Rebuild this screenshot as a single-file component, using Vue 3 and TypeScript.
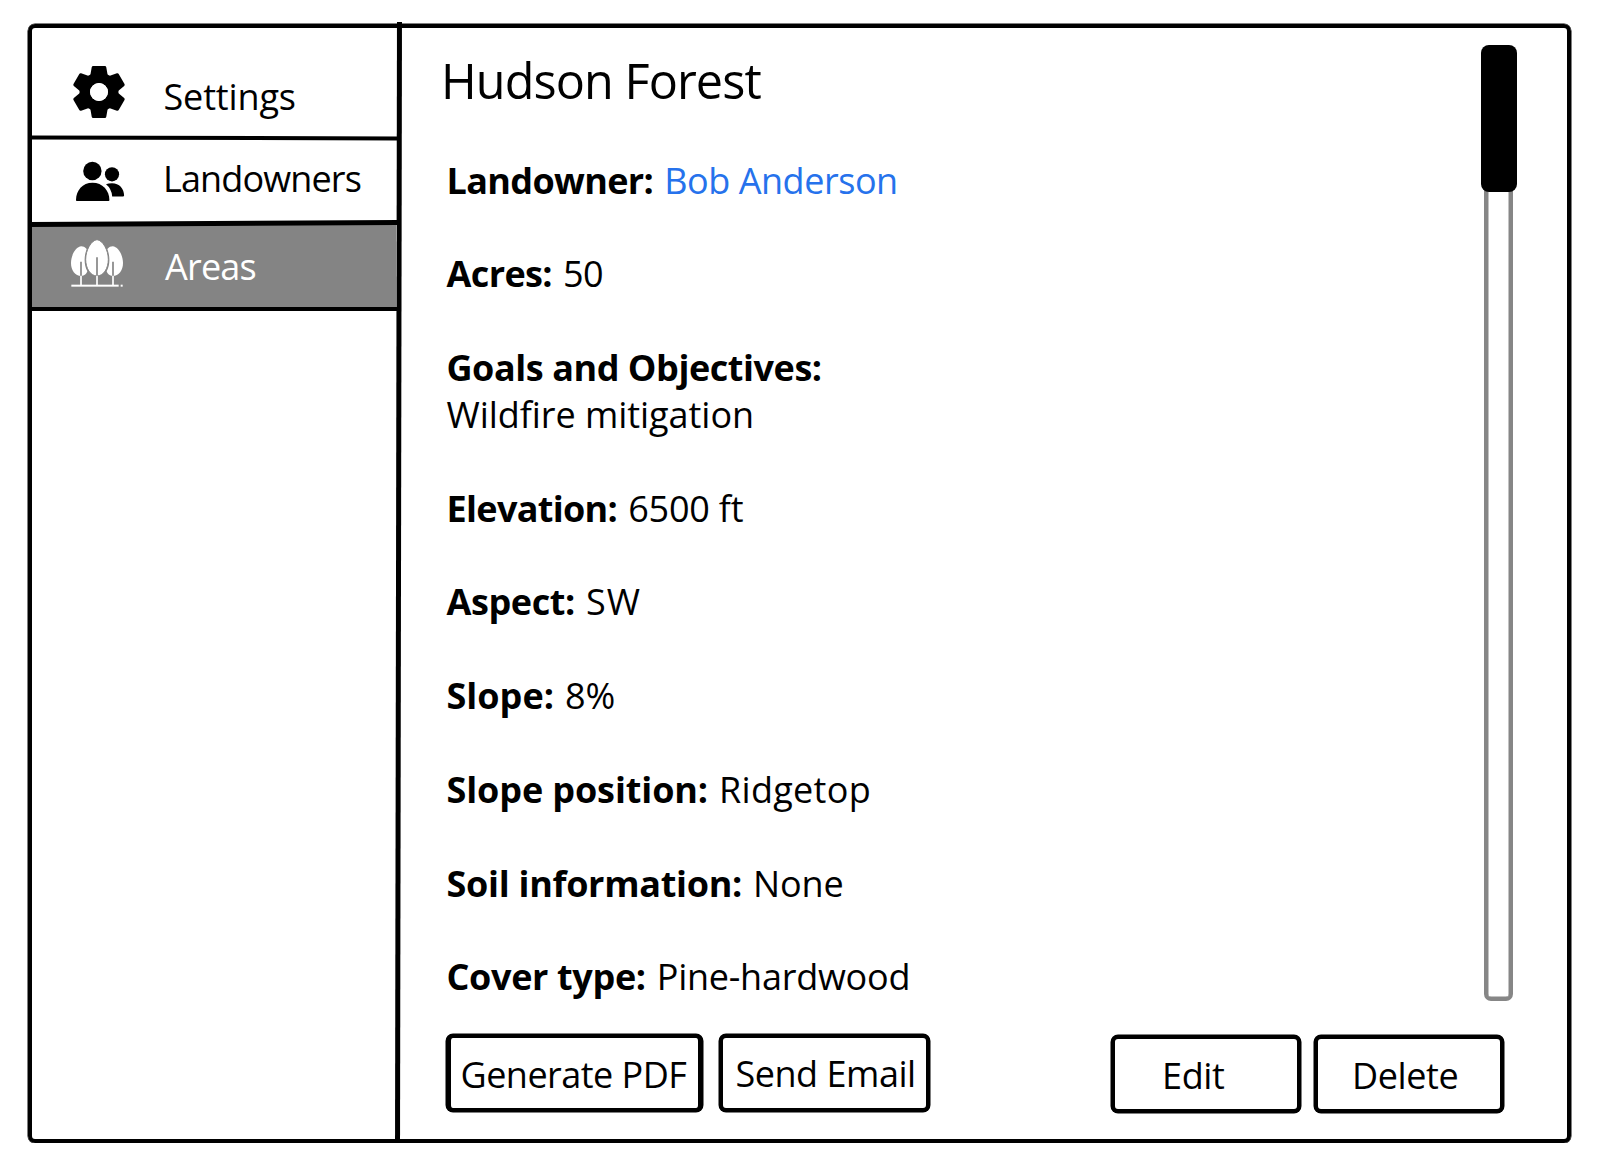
<script setup lang="ts">
interface Field {
  label: string
  value: string
  labelTracking: number
  valueTracking: number
  link?: boolean
  stacked?: boolean
}

const fields: Field[] = [
  { label: 'Landowner:', value: 'Bob Anderson', labelTracking: -0.65, valueTracking: -0.45, link: true },
  { label: 'Acres:', value: '50', labelTracking: -0.6, valueTracking: -0.7 },
  { label: 'Goals and Objectives:', value: 'Wildfire mitigation', labelTracking: -0.45, valueTracking: -0.05, stacked: true },
  { label: 'Elevation:', value: '6500 ft', labelTracking: -0.68, valueTracking: -0.2 },
  { label: 'Aspect:', value: 'SW', labelTracking: -0.4, valueTracking: 1 },
  { label: 'Slope:', value: '8%', labelTracking: 0, valueTracking: 0 },
  { label: 'Slope position:', value: 'Ridgetop', labelTracking: -0.12, valueTracking: 0.3 },
  { label: 'Soil information:', value: 'None', labelTracking: -0.3, valueTracking: -0.1 },
  { label: 'Cover type:', value: 'Pine-hardwood', labelTracking: -0.35, valueTracking: -0.25 },
]

const teeth = [0, 60, 120, 180, 240, 300]
</script>

<template>
  <div class="window">
    <nav class="sidebar">
      <a class="item settings">
        <svg class="icon" width="60" height="64" viewBox="-31 -32 60 64">
          <g fill="#000" stroke="#000" stroke-width="3" stroke-linejoin="round">
            <path v-for="a in teeth" :key="a" d="M-5.8 -24.6H5.8L7.2 -16.5L9 -12H-9L-7.2 -16.5Z" :transform="`rotate(${a})`" />
          </g>
          <circle r="14.2" fill="none" stroke="#000" stroke-width="10.6" />
          <circle r="9" fill="#fff" />
        </svg>
        <span class="text">Settings</span>
      </a>
      <a class="item landowners">
        <svg class="icon" width="60" height="50" viewBox="68 156 60 50">
          <circle cx="92.4" cy="171" r="9.2" />
          <circle cx="112" cy="174.3" r="7.1" />
          <path d="M76 200.2C76 190.5 82.5 182.8 92.5 182.8S109.4 190.5 109.4 200.2Q109.4 201 108.6 201H76.8Q76 201 76 200.2Z" />
          <path d="M106 184.2Q108.3 183.2 112 183.2C119.3 183.2 124.1 188.7 124.1 195.6Q124.1 196.4 123.3 196.4H112.2Q111.6 188.6 106 184.2Z" />
        </svg>
        <span class="text">Landowners</span>
      </a>
      <a class="item areas">
        <svg class="icon" width="60" height="55" viewBox="24 15 180 165">
          <g fill="#fff">
            <path d="M64 49C47 50 33 76 33 99C33 121 45 138 64 138C73 138 80 131 82 124C72 107 71 81 80 57C75 51 69 49 64 49Z" />
            <path d="M158 49C175 50 189 76 189 99C189 121 177 138 158 138C149 138 142 131 140 124C150 107 151 81 142 57C147 51 153 49 158 49Z" />
            <path d="M111 29C93 31 77 61 77 88C77 115 91 138 111 138S145 115 145 88C145 61 129 31 111 29Z" stroke="#848484" stroke-width="3" />
            <rect x="34" y="164" width="142" height="6" />
            <rect x="182" y="164" width="6" height="6" />
          </g>
          <g stroke-width="5" fill="none">
            <path stroke="#848484" d="M63 95V139M111 82V139M159 95V139" />
            <path stroke="#fff" d="M63 137V165M111 137V165M159 137V165" />
          </g>
        </svg>
        <span class="text">Areas</span>
      </a>
    </nav>

    <main class="main">
      <div class="body">
        <section class="details">
          <h1 class="title">Hudson Forest</h1>
          <dl class="fields">
            <div v-for="f in fields" :key="f.label" class="field" :class="{ stacked: f.stacked }">
              <dt :style="{ letterSpacing: f.labelTracking + 'px' }">{{ f.label }}</dt>
              <dd :class="{ link: f.link }" :style="{ letterSpacing: f.valueTracking + 'px' }">{{ f.value }}</dd>
            </div>
          </dl>
        </section>
        <div class="track"><div class="thumb"></div></div>
      </div>
      <footer class="actions">
        <button class="btn generate">Generate PDF</button>
        <button class="btn send">Send Email</button>
        <button class="btn edit">Edit</button>
        <button class="btn delete">Delete</button>
      </footer>
    </main>
  </div>
</template>

<style>
body {
  background: #fff;
}
</style>

<style scoped>
.window {
  box-sizing: border-box;
  width: 1543px;
  height: 1119px;
  margin: 24px 0 0 28px;
  border: 4px solid #000;
  border-radius: 7px;
  box-shadow: 0 0 0 0.5px #000;
  display: flex;
  color: #000;
  font-family: "Open Sans", "Noto Sans", sans-serif;
  font-size: 36px;
  line-height: 36px;
}

.sidebar {
  position: relative;
  width: 364px;
  flex: none;
  margin-right: 5px;
}
/* slightly slanted rule between the sidebar and the page */
.sidebar::after {
  content: "";
  position: absolute;
  top: -6px;
  bottom: -2px;
  left: 364px;
  width: 5px;
  background: #000;
  transform: skewX(-0.1deg);
}

.item {
  position: relative;
  display: flex;
  align-items: flex-start;
  padding-left: 36px;
  box-sizing: border-box;
}
.item::after {
  content: "";
  position: absolute;
  left: -2px;
  right: -2px;
  bottom: 0;
  height: 4.5px;
  background: #000;
  z-index: 1;
}
.icon {
  flex: none;
  display: block;
}
.settings {
  height: 112px;
  padding-top: 32px;
}
.settings::after {
  height: 4px;
  transform: skewY(0.12deg);
}
.settings .text {
  margin: 19px 0 0 35.5px;
  letter-spacing: -0.15px;
}
.landowners {
  height: 85px;
  padding-top: 16px;
}
.landowners::after {
  transform: skewY(-0.3deg);
}
.landowners .text {
  margin: 5px 0 0 35px;
  letter-spacing: -0.87px;
}
.areas {
  height: 86px;
  padding-top: 10px;
  color: #fff;
  background: #848484;
}
.areas::before {
  content: "";
  position: absolute;
  left: 0;
  right: 0;
  top: -3px;
  height: 4px;
  background: #848484;
}
.areas .text {
  margin: 14px 0 0 37px;
  letter-spacing: -0.8px;
}

.main {
  flex: 1;
  display: flex;
  flex-direction: column;
}
.body {
  display: flex;
  justify-content: space-between;
  height: 973px;
  padding-right: 54px;
}
.details {
  padding: 28px 0 0 40px;
}
.title {
  margin: 0;
  font-size: 48.5px;
  line-height: 48px;
  font-weight: 400;
  letter-spacing: -0.9px;
}
.fields {
  margin: 53.6px 0 0 5.5px;
  line-height: 46.87px;
}
.field {
  display: flex;
  column-gap: 11px;
  margin-bottom: 46.87px;
  white-space: nowrap;
}
.field.stacked {
  flex-direction: column;
}
dt {
  font-weight: 700;
}
dd {
  margin: 0;
  font-weight: 370;
}
.link {
  color: #2672ec;
}

.track {
  position: relative;
  box-sizing: border-box;
  width: 29px;
  margin-top: 17px;
  border: 4px solid #868686;
  box-shadow: inset 0 0 0 0.5px #868686;
  border-radius: 7px;
}
.thumb {
  position: absolute;
  left: -7px;
  top: -4px;
  width: 36px;
  height: 147px;
  border-radius: 8px;
  background: #000;
}

.actions {
  display: flex;
  align-items: flex-start;
  padding: 33px 0 0 45px;
}
.btn {
  box-sizing: border-box;
  height: 78px;
  padding: 0;
  border: 4px solid #000;
  border-radius: 7px;
  box-shadow: 0 0 0 0.5px #000;
  background: #fff;
  color: #000;
  font: inherit;
  text-align: left;
  white-space: nowrap;
  display: flex;
  align-items: flex-start;
}
.generate {
  width: 257px;
  border-width: 4px 5px;
  padding: 19px 0 0 9.5px;
  letter-spacing: -0.52px;
}
.send {
  width: 211px;
  margin-left: 16px;
  padding: 17.5px 0 0 12.5px;
  letter-spacing: -0.47px;
}
.edit {
  width: 190px;
  margin: 1px 0 0 181px;
  padding: 19px 0 0 47px;
  letter-spacing: -0.35px;
}
.delete {
  width: 190px;
  margin: 1px 0 0 13px;
  padding: 19px 0 0 34px;
  letter-spacing: -0.4px;
}
</style>
